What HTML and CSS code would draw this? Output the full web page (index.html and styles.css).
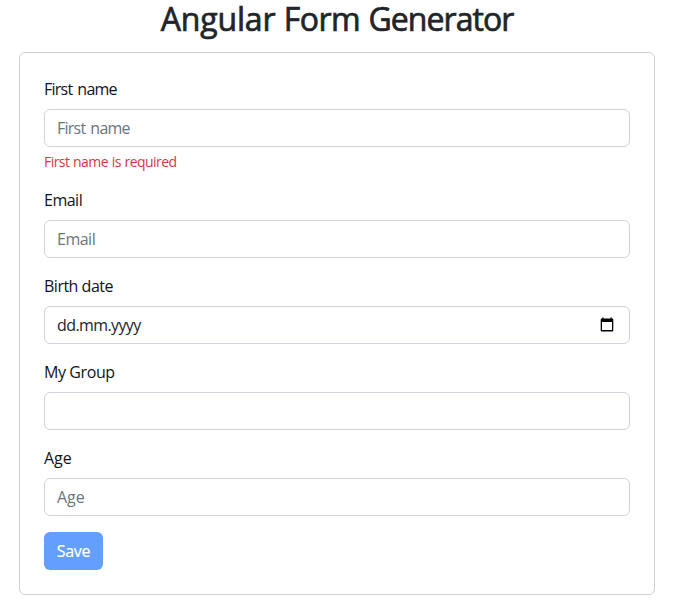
FILE: index.html
```html
<!DOCTYPE html>
<html lang="en">
<head>
<meta charset="utf-8">
<title>Angular Form Generator</title>
<link rel="stylesheet" href="styles.css">
</head>
<body>
<h1><span class="wide">Angular</span> Form <span class="tight">Generator</span></h1>
<form class="card">
  <div class="field">
    <label class="t-first">First name</label>
    <div class="control muted"><span class="t-first">First name</span></div>
    <small class="error">First name is required</small>
  </div>
  <div class="field">
    <label>Email</label>
    <div class="control muted"><span>Email</span></div>
  </div>
  <div class="field">
    <label>Birth date</label>
    <div class="control"><span class="t-date">dd.mm.yyyy</span>
      <svg class="calendar" width="16" height="16" viewBox="0 0 16 16"><path fill="#000" fill-rule="evenodd" d="M3.300 .4h1.300v1h6.800v-1h1.300v1h.6a1 1 0 0 1 1 1v11a1 1 0 0 1-1 1H2.700a1 1 0 0 1-1-1v-11a1 1 0 0 1 1-1h.6zM3 5v8h10V5z"/></svg>
    </div>
  </div>
  <div class="field">
    <label class="t-group">My Group</label>
    <div class="control"></div>
  </div>
  <div class="field">
    <label class="t-age">Age</label>
    <div class="control muted"><span class="t-age">Age</span></div>
  </div>
  <button type="button" class="save" disabled>Save</button>
</form>
</body>
</html>
```
FILE: styles.css
```css
* { box-sizing: border-box; }
body {
  margin: 0;
  padding: 0 32px 0 19px;
  font: 16px/24px "Open Sans", "Noto Sans", sans-serif;
  letter-spacing: -0.5px;
  color: #212529;
  background: #fff;
}
h1 {
  margin: 0;
  height: 52px;
  font-size: 32px;
  line-height: 38px;
  font-weight: 500;
  text-align: center;
  word-spacing: 0.5px;
  -webkit-text-stroke: 0.7px #212529;
}
.wide { letter-spacing: -0.15px; }
.tight { letter-spacing: -0.95px; }
.card {
  height: 543px;
  padding: 24px;
  border: 1px solid #ced0d3;
  border-radius: 6px;
}
.field { margin-bottom: 16px; }
label { display: block; margin-bottom: 8px; color: #101418; }
.control {
  display: flex;
  align-items: center;
  justify-content: space-between;
  height: 38px;
  padding: 0 14px 0 12px;
  border: 1px solid #ced4da;
  border-radius: 6px;
}
.muted { color: #6c757d; }
.t-first { letter-spacing: -0.75px; word-spacing: 1.5px; }
.t-date { letter-spacing: -0.6px; }
.t-group { letter-spacing: -0.4px; }
.t-age { letter-spacing: 0; }
.error {
  display: block;
  margin-top: 4px;
  font-size: 14px;
  line-height: 21px;
  letter-spacing: -0.55px;
  word-spacing: 0.6px;
  color: #dc3545;
}
.save {
  display: block;
  height: 38px;
  width: 59px;
  padding: 0;
  border: 0;
  border-radius: 6px;
  font: inherit;
  letter-spacing: -0.3px;
  color: #fff;
  background: #649fff;
  -webkit-text-stroke: 0.2px #fff;
}
```
